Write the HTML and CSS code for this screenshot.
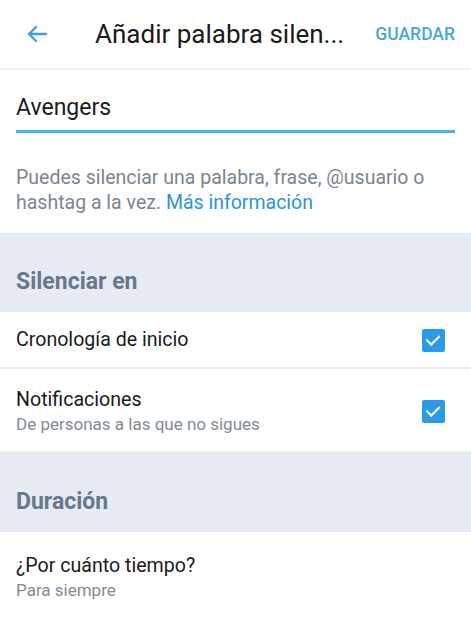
FILE: index.html
```html
<!DOCTYPE html>
<html lang="es">
<head>
    <meta charset="UTF-8">
    <meta name="viewport" content="width=device-width, initial-scale=1.0">
    <title>Añadir palabra silenciada</title>
    <link rel="stylesheet" href="styles.css">
</head>
<body>
    <div class="toolbar">
        <button class="back" aria-label="Atrás">
            <svg width="24" height="24" viewBox="0 0 24 24" fill="none" stroke="currentColor" stroke-width="2.4" stroke-linecap="round" stroke-linejoin="round">
                <path d="M21 12H4M11 5l-7 7 7 7" />
            </svg>
        </button>
        <h1>Añadir palabra silen...</h1>
        <button class="save">GUARDAR</button>
    </div>

    <div class="field">
        <div class="input">Avengers</div>
    </div>

    <p class="help"><span>Puedes silenciar una palabra, frase, @usuario o hashtag a la vez.</span> <a href="#">Más información</a></p>

    <div class="section">Silenciar en</div>
    <div class="row single">
        <div class="label">
            <div class="title">Cronología de inicio</div>
        </div>
        <span class="check"></span>
    </div>
    <div class="row">
        <div class="label">
            <div class="title">Notificaciones</div>
            <div class="sub">De personas a las que no sigues</div>
        </div>
        <span class="check"></span>
    </div>

    <div class="section">Duración</div>
    <div class="row last">
        <div class="label">
            <div class="title">¿Por cuánto tiempo?</div>
            <div class="sub">Para siempre</div>
        </div>
    </div>
</body>
</html>
```

FILE: styles.css
```css
body {
    margin: 0;
    font-family: Roboto, "Noto Sans", Arial, sans-serif;
    background-color: #fff;
    color: #14171a;
}

.toolbar {
    height: 68px;
    display: flex;
    align-items: center;
    border-bottom: 2px solid #eef1f3;
}

.back {
    background: none;
    border: none;
    color: #3d9ee3;
    padding: 0;
    margin-left: 25px;
    width: 24px;
    height: 24px;
    display: flex;
    align-items: center;
}

.toolbar h1 {
    flex: 1;
    margin: 0 0 0 46px;
    font-size: 26px;
    font-weight: 400;
    color: #1a1a1a;
    white-space: nowrap;
}

.save {
    background: none;
    border: none;
    padding: 0;
    margin-right: 16px;
    font-family: inherit;
    font-size: 17.5px;
    font-weight: 500;
    color: #4aa6dd;
}

.field {
    padding: 23px 16px 0;
}

.input {
    font-size: 23px;
    line-height: 30px;
    padding-bottom: 7px;
    border-bottom: 3px solid #4ab1ea;
    color: #1a1a1a;
}

.help {
    margin: 0;
    padding: 32px 16px 18px;
    font-size: 19.5px;
    line-height: 25px;
    color: #7b858f;
}

.help a {
    color: #2d95d8;
    text-decoration: none;
}

.section {
    background-color: #e6ecf1;
    border-top: 1px solid #dfe5ea;
    padding: 34px 16px 16px;
    font-size: 23px;
    line-height: 28px;
    font-weight: 700;
    color: #67788a;
}

.row {
    display: flex;
    align-items: center;
    padding: 18px 26px 16px 16px;
    border-bottom: 2px solid #eaeef1;
}

.row.single {
    padding-top: 15px;
    padding-bottom: 14px;
}

.row.last {
    border-bottom: none;
    padding-top: 21px;
}

.label {
    flex: 1;
}

.title {
    font-size: 19.6px;
    line-height: 26px;
    color: #1a1a1a;
}

.sub {
    font-size: 17px;
    line-height: 22px;
    color: #808b95;
}

.check {
    width: 23px;
    height: 23px;
    border-radius: 2px;
    background-color: #2a9be8;
    position: relative;
}

.check::after {
    content: "";
    position: absolute;
    left: 7px;
    top: 3px;
    width: 6px;
    height: 11px;
    border: solid #fff;
    border-width: 0 2.5px 2.5px 0;
    transform: rotate(45deg);
}
```
